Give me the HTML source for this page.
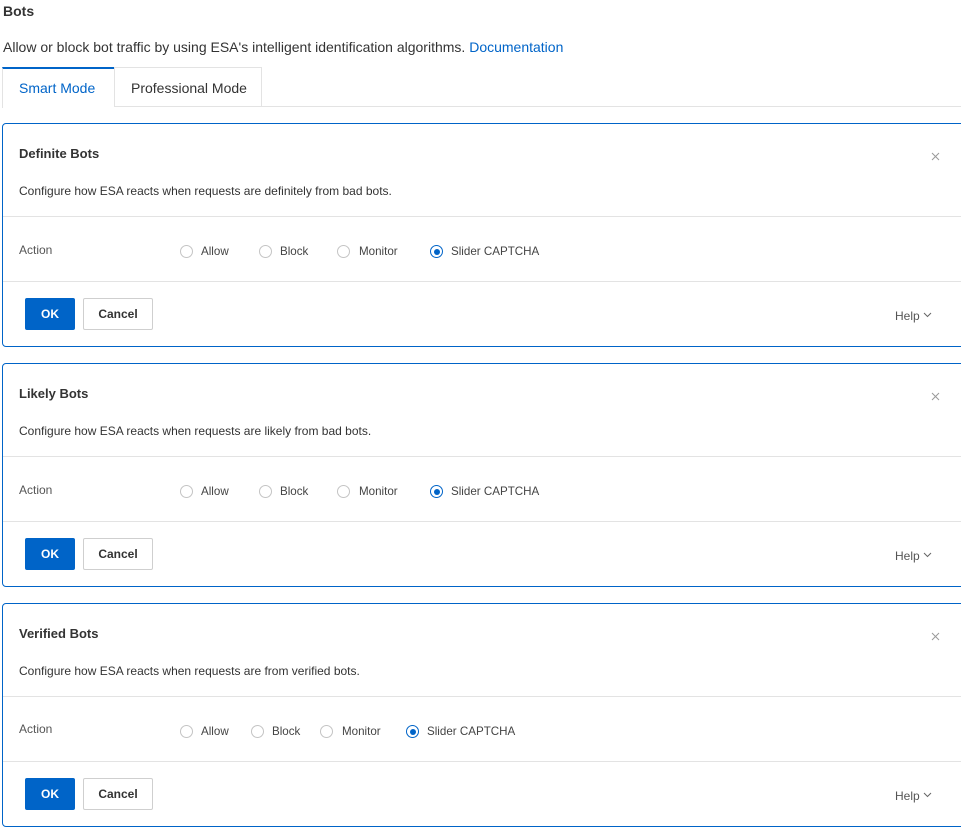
<!DOCTYPE html>
<html><head><style>
body{margin:0;width:961px;height:832px;overflow:hidden;background:#fff;font-family:"Liberation Sans",sans-serif;color:#333;position:relative}
.a{position:absolute;white-space:nowrap}
.card{position:absolute;left:2px;width:980px;height:224px;border:1px solid #0064c8;border-radius:4px;box-sizing:border-box}
.card .hr{position:absolute;left:0;right:0;height:1px;background:#e3e3e3}
.r{position:absolute;width:13px;height:13px;border:1px solid #c4c4c4;border-radius:50%;box-sizing:border-box;top:121px}
.r.on{border-color:#0064c8}
.r.on:after{content:"";position:absolute;left:2.5px;top:2.5px;width:6px;height:6px;border-radius:50%;background:#0064c8}
.lbl{position:absolute;top:121px;font-size:11.6px;color:#444}
.ok{position:absolute;left:22px;top:174px;width:50px;height:32px;background:#0064c8;color:#fff;font-weight:bold;font-size:12px;text-align:center;line-height:32px;border-radius:2px}
.cn{position:absolute;left:80px;top:174px;width:70px;height:32px;border:1px solid #cfcfcf;box-sizing:border-box;font-weight:bold;font-size:12px;text-align:center;line-height:30px;color:#333;border-radius:2px}
.x{position:absolute;left:928px;top:28px;width:9px;height:9px}
.help{position:absolute;left:892px;top:185px;font-size:12px;color:#555}
</style></head><body>
<div class="a" style="left:3px;top:3px;font-size:14px;font-weight:bold">Bots</div>
<div class="a" style="left:3px;top:39px;font-size:14px">Allow or block bot traffic by using ESA's intelligent identification algorithms. <span style="color:#0064c8">Documentation</span></div>
<div class="a" style="left:2px;top:67px;width:112px;height:41px;border-top:2px solid #0064c8;border-left:1px solid #e3e3e3;box-sizing:border-box;background:#fff"></div>
<div class="a" style="left:19px;top:80px;font-size:14px;color:#0064c8">Smart Mode</div>
<div class="a" style="left:114px;top:67px;width:148px;height:40px;border:1px solid #e3e3e3;box-sizing:border-box"></div>
<div class="a" style="left:131px;top:80px;font-size:14px">Professional Mode</div>
<div class="a" style="left:262px;top:106px;width:700px;height:1px;background:#e3e3e3"></div>

<div class="card" style="top:123px">
<div class="a" style="left:16px;top:22px;font-size:13px;font-weight:bold">Definite Bots</div>
<svg class="x" viewBox="0 0 9 9"><path d="M1 1L8 8M8 1L1 8" stroke="#999" stroke-width="1"/></svg>
<div class="a" style="left:16px;top:60px;font-size:12px">Configure how ESA reacts when requests are definitely from bad bots.</div>
<div class="hr" style="top:92px"></div>
<div class="a" style="left:16px;top:119px;font-size:12px;color:#555">Action</div>
<div class="r" style="left:177px"></div><div class="lbl" style="left:198px">Allow</div>
<div class="r" style="left:256px"></div><div class="lbl" style="left:277px">Block</div>
<div class="r" style="left:334px"></div><div class="lbl" style="left:356px">Monitor</div>
<div class="r on" style="left:427px"></div><div class="lbl" style="left:448px">Slider CAPTCHA</div>
<div class="hr" style="top:157px"></div>
<div class="ok">OK</div><div class="cn">Cancel</div>
<div class="help">Help <svg width="9" height="6" viewBox="0 0 9 6" style="vertical-align:2px"><path d="M1 1L4.5 4.5L8 1" stroke="#666" fill="none"/></svg></div>
</div>

<div class="card" style="top:363px">
<div class="a" style="left:16px;top:22px;font-size:13px;font-weight:bold">Likely Bots</div>
<svg class="x" viewBox="0 0 9 9"><path d="M1 1L8 8M8 1L1 8" stroke="#999" stroke-width="1"/></svg>
<div class="a" style="left:16px;top:60px;font-size:12px">Configure how ESA reacts when requests are likely from bad bots.</div>
<div class="hr" style="top:92px"></div>
<div class="a" style="left:16px;top:119px;font-size:12px;color:#555">Action</div>
<div class="r" style="left:177px"></div><div class="lbl" style="left:198px">Allow</div>
<div class="r" style="left:256px"></div><div class="lbl" style="left:277px">Block</div>
<div class="r" style="left:334px"></div><div class="lbl" style="left:356px">Monitor</div>
<div class="r on" style="left:427px"></div><div class="lbl" style="left:448px">Slider CAPTCHA</div>
<div class="hr" style="top:157px"></div>
<div class="ok">OK</div><div class="cn">Cancel</div>
<div class="help">Help <svg width="9" height="6" viewBox="0 0 9 6" style="vertical-align:2px"><path d="M1 1L4.5 4.5L8 1" stroke="#666" fill="none"/></svg></div>
</div>

<div class="card" style="top:603px">
<div class="a" style="left:16px;top:22px;font-size:13px;font-weight:bold">Verified Bots</div>
<svg class="x" viewBox="0 0 9 9"><path d="M1 1L8 8M8 1L1 8" stroke="#999" stroke-width="1"/></svg>
<div class="a" style="left:16px;top:60px;font-size:12px">Configure how ESA reacts when requests are from verified bots.</div>
<div class="hr" style="top:92px"></div>
<div class="a" style="left:16px;top:118px;font-size:12px;color:#555">Action</div>
<div class="r" style="left:177px"></div><div class="lbl" style="left:198px">Allow</div>
<div class="r" style="left:248px"></div><div class="lbl" style="left:269px">Block</div>
<div class="r" style="left:317px"></div><div class="lbl" style="left:339px">Monitor</div>
<div class="r on" style="left:403px"></div><div class="lbl" style="left:424px">Slider CAPTCHA</div>
<div class="hr" style="top:157px"></div>
<div class="ok">OK</div><div class="cn">Cancel</div>
<div class="help">Help <svg width="9" height="6" viewBox="0 0 9 6" style="vertical-align:2px"><path d="M1 1L4.5 4.5L8 1" stroke="#666" fill="none"/></svg></div>
</div>
</body></html>
